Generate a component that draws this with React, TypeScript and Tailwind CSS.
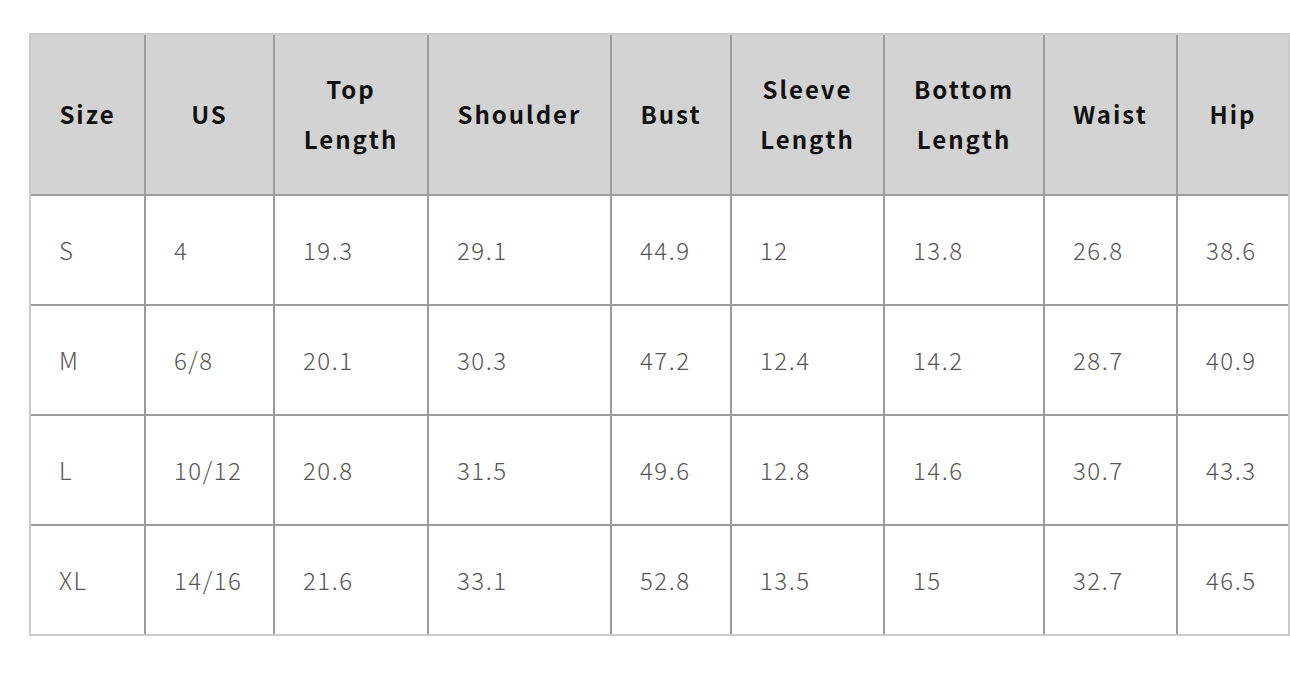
import React from 'react';

const widths = ['w-[113px]', 'w-[127px]', 'w-[152px]', 'w-[181px]', 'w-[118px]', 'w-[151px]', 'w-[158px]', 'w-[131px]', 'w-[110px]'];

const headers = [['Size'], ['US'], ['Top', 'Length'], ['Shoulder'], ['Bust'], ['Sleeve', 'Length'], ['Bottom', 'Length'], ['Waist'], ['Hip']];

const rows = [
  ['S', '4', '19.3', '29.1', '44.9', '12', '13.8', '26.8', '38.6'],
  ['M', '6/8', '20.1', '30.3', '47.2', '12.4', '14.2', '28.7', '40.9'],
  ['L', '10/12', '20.8', '31.5', '49.6', '12.8', '14.6', '30.7', '43.3'],
  ['XL', '14/16', '21.6', '33.1', '52.8', '13.5', '15', '32.7', '46.5'],
];

export default function App() {
  return (
    <div className="w-[1290px] h-[692px] bg-white pt-[33px] pl-[29px]" style={{ fontFamily: '"Noto Sans CJK SC", "Noto Sans", sans-serif' }}>
      <div className="inline-flex flex-col gap-[2px] bg-[#9c9c9c] border-2 border-[#cbcbcb]">
        <div className="flex gap-[2px]">
          {headers.map((h, i) => (
            <div
              key={i}
              className={`${widths[i]} h-[159px] pb-[2px] bg-[#d3d3d3] flex flex-col items-center justify-center text-[24px] leading-[50px] font-bold tracking-[2px] text-[#111]`}
            >
              {h.map((line) => (
                <span key={line}>{line}</span>
              ))}
            </div>
          ))}
        </div>
        {rows.map((r, ri) => (
          <div key={ri} className="flex gap-[2px]">
            {r.map((c, ci) => (
              <div
                key={ci}
                className={`${widths[ci]} h-[108px] bg-white flex items-center pl-[28px] text-[24px] font-light tracking-[1.5px] text-[#555]`}
              >
                {c}
              </div>
            ))}
          </div>
        ))}
      </div>
    </div>
  );
}
